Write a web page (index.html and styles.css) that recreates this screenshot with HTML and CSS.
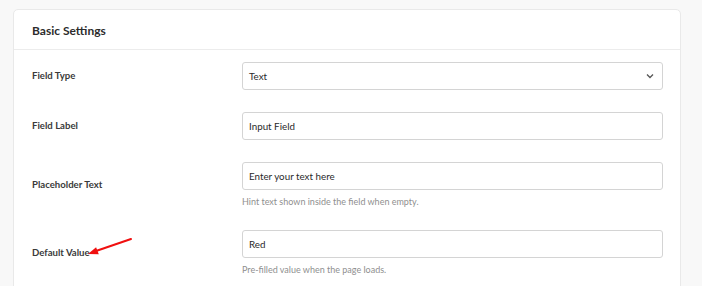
FILE: index.html
```html
<!DOCTYPE html>
<html>
<head>
<meta charset="utf-8">
<link rel="stylesheet" href="styles.css">
</head>
<body>
<div class="card">
  <div class="card-header">Basic Settings</div>
  <div class="card-body">
    <div class="row">
      <div class="label">Field Type</div>
      <div class="control">
        <div class="input select"><span>Text</span>
          <svg class="chev" width="8" height="6" viewBox="0 0 8 6"><path d="M1 1.5 L4 4.5 L7 1.5" fill="none" stroke="#555" stroke-width="1.3"/></svg>
        </div>
      </div>
    </div>
    <div class="row">
      <div class="label">Field Label</div>
      <div class="control"><div class="input">Input Field</div></div>
    </div>
    <div class="row">
      <div class="label">Placeholder Text</div>
      <div class="control">
        <div class="input">Enter your text here</div>
        <div class="hint">Hint text shown inside the field when empty.</div>
      </div>
    </div>
    <div class="row row-arrow">
      <div class="label">Default Value</div>
      <div class="control">
        <div class="input">Red</div>
        <div class="hint">Pre-filled value when the page loads.</div>
      </div>
      <svg class="arrow" width="110" height="32" viewBox="0 0 110 32"><path d="M99 9 L64 21" stroke="#f01010" stroke-width="2" fill="none" stroke-linecap="round"/><path d="M56 24 L66.8 24.2 L64.1 17.2 Z" fill="#f01010"/></svg>
    </div>
  </div>
</div>
</body>
</html>
```
FILE: styles.css
```css
* { box-sizing: border-box; }
body {
  margin: 0;
  padding: 9px 21px 0 13px;
  background: #f8f8f8;
  font-family: "Lato", "Open Sans", sans-serif;
  color: #333;
  height: 286px;
  overflow: hidden;
}
.card {
  background: #fff;
  border: 1px solid #e9e9e9;
  border-radius: 5px;
  height: 300px;
}
.card-header {
  height: 40px;
  padding: 1px 18px 0;
  display: flex;
  align-items: center;
  font-size: 12px;
  font-weight: 700;
  color: #2c2c2c;
  border-bottom: 1px solid #ececec;
}
.card-body {
  padding: 12px 17px 0 18px;
  display: flex;
  flex-direction: column;
  gap: 22px;
}
.row {
  display: grid;
  grid-template-columns: 210px 1fr;
  align-items: center;
}
.row-arrow { position: relative; }
.arrow {
  position: absolute;
  left: 0;
  top: 0;
}
.label {
  font-size: 9.6px;
  font-weight: 700;
  color: #3a3a3a;
  line-height: 14px;
}
.input {
  height: 28px;
  border: 1px solid #d4d4d4;
  border-radius: 3px;
  padding: 0 8px 0 6px;
  display: flex;
  align-items: center;
  font-size: 9.8px;
  color: #2a2a2a;
}
.select { justify-content: space-between; }
.hint {
  margin-top: 5px;
  font-size: 9px;
  color: #8f8f8f;
  line-height: 13px;
}
```
